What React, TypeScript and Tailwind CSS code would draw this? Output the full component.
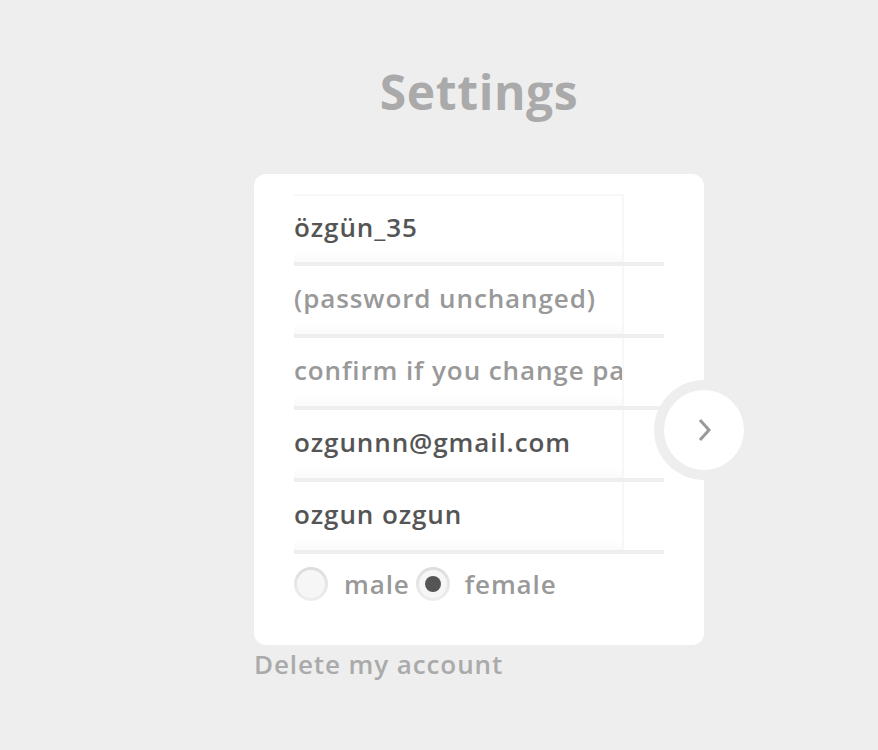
import React from 'react';

const font = { fontFamily: '"Open Sans", "DejaVu Sans", sans-serif' };

function Field({ value, placeholder, first }: { value?: string; placeholder?: string; first?: boolean }) {
  return (
    <div className="w-[370px] border-b-4 border-[#eeeeee]">
      <div
        className={`w-[330px] h-[68px] pb-[4px] flex items-center overflow-hidden whitespace-nowrap border-r-2 border-[#f7f7f7] bg-gradient-to-b from-white from-85% to-[#fafafa] ${first ? 'border-t-2' : ''}`}
      >
        {value ? (
          <span className="text-[26px] text-[#555555] font-semibold tracking-[0.9px]">{value}</span>
        ) : (
          <span className="text-[26px] text-[#999999] font-semibold tracking-[0.9px]">{placeholder}</span>
        )}
      </div>
    </div>
  );
}

function Radio({ checked }: { checked?: boolean }) {
  return (
    <div className="w-[34px] h-[34px] rounded-full bg-gradient-to-b from-[#dddddd] to-[#eeeeee] flex items-center justify-center">
      <div className="w-[28px] h-[28px] rounded-full bg-[#f6f6f6] flex items-center justify-center">
        {checked && <div className="w-[16px] h-[16px] rounded-full bg-[#555555]" />}
      </div>
    </div>
  );
}

export default function App() {
  return (
    <div className="min-h-screen bg-[#eeeeee] pl-[254px] pt-[62px]" style={font}>
      <div className="w-[450px]">
        <h1 className="text-center text-[48px] font-bold text-[#aaaaaa] leading-[60px] tracking-[0.6px]">Settings</h1>

        <div className="relative mt-[52px] bg-white rounded-[12px] pt-[20px] pl-[40px] h-[471px]">
          <Field value="özgün_35" first />
          <Field placeholder="(password unchanged)" />
          <Field placeholder="confirm if you change password" />
          <Field value="ozgunnn@gmail.com" />
          <Field value="ozgun ozgun" />

          <div className="flex items-center mt-[13px] h-[34px]">
            <Radio />
            <span className="ml-[16px] mr-[6px] text-[26px] font-semibold tracking-[0.9px] text-[#999999]">male</span>
            <Radio checked />
            <span className="ml-[15px] text-[26px] font-semibold tracking-[0.9px] text-[#999999]">female</span>
          </div>

          <button className="absolute left-[400px] top-[206px] w-[100px] h-[100px] rounded-full bg-[#eeeeee] flex items-center justify-center">
            <span className="w-[80px] h-[80px] rounded-full bg-white flex items-center justify-center">
              <svg width="18" height="26" viewBox="0 0 18 26" fill="none" className="ml-[2px]">
                <path d="M4 3 L13 13 L4 23" stroke="#999999" strokeWidth="3" strokeLinejoin="miter" />
              </svg>
            </span>
          </button>
        </div>

        <div className="text-[26px] text-[#aaaaaa] font-semibold tracking-[0.9px]">Delete my account</div>
      </div>
    </div>
  );
}
